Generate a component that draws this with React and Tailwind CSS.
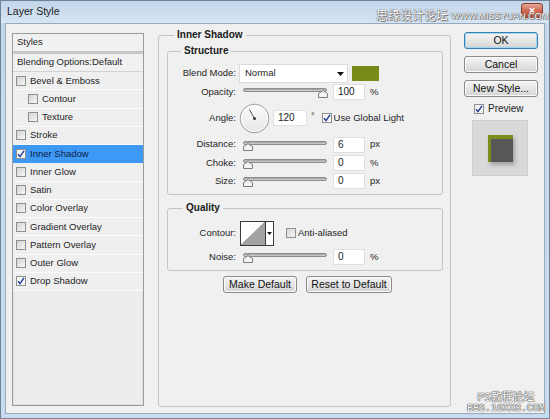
import React from "react";

function Check({ checked, className = "" }) {
  return (
    <span
      className={`inline-flex w-[10px] h-[10px] shrink-0 items-center justify-center border border-[#8e8f8f] ${
        checked ? "bg-[#f6f6f6]" : "bg-linear-to-br from-[#d4d4d4] to-[#f7f7f7]"
      } ${className}`}
    >
      {checked && (
        <svg width="8" height="8" viewBox="0 0 8 8">
          <path d="M1 4.2 L3 6.6 L7 0.8" fill="none" stroke="#22399a" strokeWidth="1.4" />
        </svg>
      )}
    </span>
  );
}

function Slider({ right }) {
  return (
    <div className="relative w-[86px] h-[12px] shrink-0">
      <div className="absolute left-[1px] right-[1px] top-[2px] h-[4px] rounded-[2px] border border-[#8d8d8d] bg-linear-to-b from-[#9c9c9c] to-[#d6d6d6]" />
      <svg
        className={`absolute top-[4px] ${right ? "left-[76px]" : "left-[1px]"}`}
        width="10"
        height="8"
        viewBox="0 0 10 8"
      >
        <path d="M0.5 7.5 V3.5 L5 0.6 L9.5 3.5 V7.5 Z" fill="#f3f3f3" stroke="#7c7c7c" />
      </svg>
    </div>
  );
}

function Num({ v, w = "w-[32px]", className = "" }) {
  return (
    <div
      className={`${w} h-[16px] shrink-0 bg-white border border-[#e0e0e0] pl-[4px] leading-[14px] text-[10px] text-[#222] ${className}`}
    >
      {v}
    </div>
  );
}

function Row({ label, h, children }) {
  return (
    <div className={`flex items-center ${h}`}>
      <div className="w-[68px] shrink-0 text-right">{label}</div>
      {children}
    </div>
  );
}

function Btn({ children, w = "w-[74px]", primary, className = "" }) {
  return (
    <div
      className={`${w} h-[17px] shrink-0 flex items-center justify-center rounded-[3px] border text-[10.5px] text-[#111] bg-linear-to-b from-[#f4f4f4] via-[#e6e6e6] to-[#d4d4d4] ${
        primary
          ? "border-[#3c7fb1] shadow-[inset_0_0_0_1px_#9fd6f6]"
          : "border-[#8a8a8a] shadow-[inset_0_0_0_1px_#fbfbfb]"
      } ${className}`}
    >
      {children}
    </div>
  );
}

const styles = [
  { name: "Bevel & Emboss" },
  { name: "Contour", indent: true },
  { name: "Texture", indent: true },
  { name: "Stroke" },
  { name: "Inner Shadow", checked: true, selected: true },
  { name: "Inner Glow" },
  { name: "Satin" },
  { name: "Color Overlay" },
  { name: "Gradient Overlay" },
  { name: "Pattern Overlay" },
  { name: "Outer Glow" },
  { name: "Drop Shadow", checked: true },
];

export default function App() {
  return (
    <div className="relative w-[550px] h-[419px] flex flex-col overflow-hidden border border-[#6f8398] bg-linear-to-b from-[#c6d8ec] to-[#c9dbee] font-['Liberation_Sans',Arial,sans-serif] text-[9.5px] text-[#1e1e1e]">
      {/* Title bar */}
      <div className="h-[22px] shrink-0 flex items-center pl-[6px] bg-linear-to-b from-[#c2d5ea] to-[#d7e5f3]">
        <span className="text-[10.5px] text-[#1a1a1a]">Layer Style</span>
        <div className="ml-auto mr-[6px] w-[22px] h-[15px] mt-[-3px] rounded-[3px] border border-[#8a3b32] bg-linear-to-b from-[#e4a595] via-[#cf6a55] to-[#c24a38] flex items-center justify-center text-white text-[11px] leading-none font-bold">
          ×
        </div>
      </div>

      {/* Body */}
      <div className="flex-1 mx-[4px] mb-[4px] border border-[#97a9bd] bg-[#f0f0f0] flex items-start pl-[6px] pr-[5px]">
        {/* Left list */}
        <div className="mt-[9px] w-[132px] h-[373px] shrink-0 border border-[#9b9b9b] shadow-[inset_0_0_0_1px_#dedede] bg-[#ededed] flex flex-col">
          <div className="h-[17px] shrink-0 flex items-center pl-[4px] bg-[#f1f1f1]">Styles</div>
          <div className="h-[3px] shrink-0 bg-[#c6c6c6]" />
          <div className="h-[17px] shrink-0 flex items-center pl-[4px] bg-[#f1f1f1]">Blending Options:Default</div>
          <div className="h-[1px] shrink-0 bg-[#d2d2d2]" />
          {styles.map((s) => (
            <div
              key={s.name}
              className={`h-[18.25px] shrink-0 flex items-center border-b ${
                s.selected ? "bg-[#3d99f5] border-[#3d99f5] text-[#0d1d4a]" : "bg-[#efefef] border-[#fbfbfb]"
              } ${s.indent ? "pl-[15px]" : "pl-[3px]"}`}
            >
              <Check checked={s.checked} />
              <span className="ml-[4px]">{s.name}</span>
            </div>
          ))}
        </div>

        {/* Middle */}
        <fieldset className="ml-[14px] mt-[5px] w-[293px] h-[378px] shrink-0 border border-[#c4c4c4] rounded-[3px]">
          <legend className="ml-[15px] px-[3px] leading-[12px] text-[10px] font-bold text-[#1a1a1a]">Inner Shadow</legend>
          <div className="pl-[8px] pt-[4px] flex flex-col">
            {/* Structure */}
            <fieldset className="w-[276px] border border-[#c4c4c4] rounded-[3px] pt-[7px] pb-[4px]">
              <legend className="ml-[13px] px-[3px] leading-[12px] text-[10px] font-bold text-[#1a1a1a]">Structure</legend>
              <Row label="Blend Mode:" h="h-[19px]">
                <div className="ml-[3px] w-[109px] h-[19px] bg-white border border-[#dcdcdc] flex items-center pl-[5px] pr-[3px]">
                  <span>Normal</span>
                  <svg className="ml-auto" width="7" height="4" viewBox="0 0 7 4">
                    <path d="M0 0 H7 L3.5 4 Z" fill="#111" />
                  </svg>
                </div>
                <div className="ml-[4px] w-[27px] h-[15px] bg-[#7a8a18]" />
              </Row>
              <Row label="Opacity:" h="h-[18px]">
                <div className="ml-[6px]"><Slider right /></div>
                <Num v="100" className="ml-[5px]" />
                <span className="ml-[5px]">%</span>
              </Row>
              <Row label="Angle:" h="h-[34px]">
                <svg className="ml-[3px] shrink-0" width="31" height="31" viewBox="0 0 31 31">
                  <defs>
                    <linearGradient id="dialg" x1="0" y1="0" x2="0" y2="1">
                      <stop offset="0" stopColor="#fdfdfd" />
                      <stop offset="1" stopColor="#e6e6e6" />
                    </linearGradient>
                  </defs>
                  <circle cx="15.5" cy="15.5" r="14.3" fill="url(#dialg)" stroke="#9a9a9a" />
                  <circle cx="15.5" cy="15.5" r="13.2" fill="none" stroke="#ffffff" strokeWidth="0.8" />
                  <line x1="15.5" y1="15.5" x2="10.3" y2="6.4" stroke="#555" strokeWidth="1" />
                  <circle cx="15.5" cy="15.5" r="1.5" fill="#333" />
                </svg>
                <Num v="120" w="w-[34px]" className="ml-[3px]" />
                <span className="ml-[4px] text-[9px] self-start mt-[9px]">°</span>
                <Check checked className="ml-[7px]" />
                <span className="ml-[2px]">Use Global Light</span>
              </Row>
              <Row label="Distance:" h="h-[19px]">
                <div className="ml-[6px]"><Slider /></div>
                <Num v="6" className="ml-[5px]" />
                <span className="ml-[5px]">px</span>
              </Row>
              <Row label="Choke:" h="h-[18px]">
                <div className="ml-[6px]"><Slider /></div>
                <Num v="0" className="ml-[5px]" />
                <span className="ml-[5px]">%</span>
              </Row>
              <Row label="Size:" h="h-[18px]">
                <div className="ml-[6px]"><Slider /></div>
                <Num v="0" className="ml-[5px]" />
                <span className="ml-[5px]">px</span>
              </Row>
            </fieldset>

            {/* Quality */}
            <fieldset className="mt-[7px] w-[276px] border border-[#c4c4c4] rounded-[3px] pt-[6px] pb-[4px]">
              <legend className="ml-[15px] px-[3px] leading-[12px] text-[10px] font-bold text-[#1a1a1a]">Quality</legend>
              <Row label="Contour:" h="h-[26px]">
                <div className="ml-[4px] w-[34px] h-[25px] shrink-0 flex border border-[#3a3a3a] bg-white">
                  <svg className="shrink-0" width="24" height="23" viewBox="0 0 24 23">
                    <path d="M0 23 L24 0 V23 Z" fill="#a3a3a3" />
                    <path d="M0 23 L24 0" stroke="#8a8a8a" strokeWidth="0.8" />
                  </svg>
                  <div className="flex-1 border-l border-[#3a3a3a] flex items-center justify-center">
                    <svg width="5" height="3" viewBox="0 0 5 3">
                      <path d="M0 0 H5 L2.5 3 Z" fill="#111" />
                    </svg>
                  </div>
                </div>
                <Check className="ml-[12px]" />
                <span className="ml-[2px]">Anti-aliased</span>
              </Row>
              <div className="h-[2px]" />
              <Row label="Noise:" h="h-[18px]">
                <div className="ml-[6px]"><Slider /></div>
                <Num v="0" className="ml-[5px]" />
                <span className="ml-[5px]">%</span>
              </Row>
            </fieldset>

            <div className="mt-[5px] flex justify-center gap-[9px] pr-[2px]">
              <Btn>Make Default</Btn>
              <Btn w="w-[86px]">Reset to Default</Btn>
            </div>
          </div>
        </fieldset>

        {/* Right column */}
        <div className="ml-[13px] mt-[8px] w-[74px] shrink-0 flex flex-col">
          <Btn primary>OK</Btn>
          <Btn className="mt-[7px]">Cancel</Btn>
          <Btn className="mt-[7px]">New Style...</Btn>
          <div className="mt-[6px] ml-[10px] h-[11px] flex items-center">
            <Check checked />
            <span className="ml-[4px] text-[10px]">Preview</span>
          </div>
          <div className="mt-[6px] ml-[8px] w-[56px] h-[56px] bg-[#d9d9d9] border border-[#cdcdcd] flex items-center justify-center">
            <div className="w-[25px] h-[27px] bg-[#575757] border-t-[4px] border-l-[3px] border-[#7b8b1c] shadow-[2px_3px_4px_rgba(0,0,0,0.25)]" />
          </div>
        </div>
      </div>

      {/* Watermarks */}
      <div className="absolute top-[6px] left-[375px] flex items-end gap-[3px] whitespace-nowrap text-white [text-shadow:0_0_1px_#555,0_0_1px_#555,1px_1px_0_#888]">
        <span className="block text-[12px] leading-[16px] font-['Noto_Sans_CJK_SC','Noto_Sans',sans-serif]">思缘设计论坛</span>
        <span className="block text-[9px] leading-[14px] font-['Liberation_Sans',Arial,sans-serif]">WWW.MISSYUAN.COM</span>
      </div>
      <div className="absolute left-[462px] top-[389px] w-[86px] flex flex-col items-center whitespace-nowrap text-white [text-shadow:0_0_1px_#444,0_0_1px_#444,0_0_1px_#444]">
        <span className="block h-[13px] text-[11px] leading-[13px] font-['Noto_Sans_CJK_SC','Noto_Sans',sans-serif]">PS教程论坛</span>
        <span className="block h-[12px] text-[10px] leading-[12px] font-['Liberation_Mono',monospace]">BBS.16XX8.COM</span>
      </div>
    </div>
  );
}
